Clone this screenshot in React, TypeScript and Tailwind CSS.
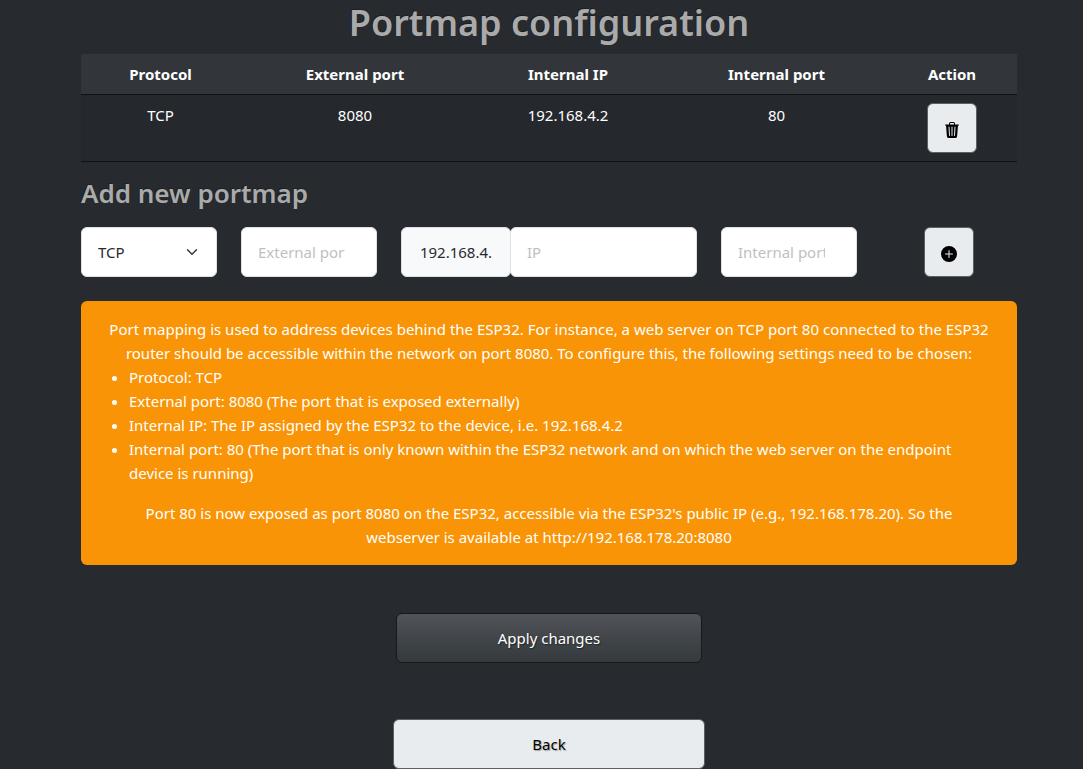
import { useState } from "react";

const heading = "font-semibold text-[#aaaaaa] [text-shadow:-1px_-1px_0_rgba(0,0,0,0.3)]";
const field =
  "h-[50px] w-full min-w-0 rounded-md border border-[#dee2e6] bg-white px-4 text-[#272b30] outline-none placeholder:text-[#bfbfbf]";
const iconButton =
  "flex size-[50px] items-center justify-center rounded-md border border-[#5d6063] bg-[#e9ecef] text-black";

const mappings = [{ protocol: "TCP", external: "8080", ip: "192.168.4.2", internal: "80" }];

function TrashIcon() {
  return (
    <svg viewBox="0 0 16 16" className="mt-1 size-4" fill="currentColor" aria-hidden="true">
      <path d="M11 1.5v1h3.5a.5.5 0 0 1 0 1h-.538l-.853 10.66A2 2 0 0 1 11.115 16h-6.23a2 2 0 0 1-1.994-1.84L2.038 3.5H1.5a.5.5 0 0 1 0-1H5v-1A1.5 1.5 0 0 1 6.5 0h3A1.5 1.5 0 0 1 11 1.5m-5 0v1h4v-1a.5.5 0 0 0-.5-.5h-3a.5.5 0 0 0-.5.5M4.5 5.029l.5 8.5a.5.5 0 1 0 .998-.06l-.5-8.5a.5.5 0 1 0-.998.06m6.53-.528a.5.5 0 0 0-.528.47l-.5 8.5a.5.5 0 0 0 .998.058l.5-8.5a.5.5 0 0 0-.47-.528M8 4.5a.5.5 0 0 0-.5.5v8.5a.5.5 0 0 0 1 0V5a.5.5 0 0 0-.5-.5" />
    </svg>
  );
}

function PlusIcon() {
  return (
    <svg viewBox="0 0 16 16" className="mt-1 size-4" fill="currentColor" aria-hidden="true">
      <path d="M16 8A8 8 0 1 1 0 8a8 8 0 0 1 16 0M8.5 4.5a.5.5 0 0 0-1 0v3h-3a.5.5 0 0 0 0 1h3v3a.5.5 0 0 0 1 0v-3h3a.5.5 0 0 0 0-1h-3z" />
    </svg>
  );
}

export default function App() {
  const [protocol, setProtocol] = useState("TCP");
  return (
    <div className="min-h-screen bg-[#272b30] pl-[15px] font-['Noto_Sans',sans-serif] text-[15px] leading-6 text-white">
      <main className="mx-auto max-w-[936px]">
        <h1 className={`${heading} pb-2 text-center text-[36px] leading-[46px]`}>Portmap configuration</h1>

        <table className="w-full table-fixed border-collapse text-center">
          <colgroup>
            <col className="w-[159px]" />
            <col className="w-[230px]" />
            <col className="w-[196px]" />
            <col className="w-[221px]" />
            <col className="w-[130px]" />
          </colgroup>
          <thead>
            <tr className="border-b border-[#0f1113] bg-[#32353a]">
              {["Protocol", "External port", "Internal IP", "Internal port", "Action"].map((label) => (
                <th key={label} scope="col" className="p-2 font-bold">{label}</th>
              ))}
            </tr>
          </thead>
          <tbody>
            {mappings.map((m) => (
              <tr key={m.external} className="border-b border-[#0f1113] bg-[#25282d] align-top">
                <td className="p-2">{m.protocol}</td>
                <td className="p-2">{m.external}</td>
                <td className="p-2">{m.ip}</td>
                <td className="p-2">{m.internal}</td>
                <td className="p-2">
                  <button type="button" aria-label="Delete" className={`${iconButton} mx-auto`}>
                    <TrashIcon />
                  </button>
                </td>
              </tr>
            ))}
          </tbody>
        </table>

        <h2 className={`${heading} pt-[15px] pb-[17px] text-[26px] leading-[33px]`}>Add new portmap</h2>

        <form className="grid grid-cols-6 gap-6" onSubmit={(e) => e.preventDefault()}>
          <div className="grid items-center">
            <select
              aria-label="Protocol"
              value={protocol}
              onChange={(e) => setProtocol(e.target.value)}
              className={`${field} col-start-1 row-start-1 appearance-none`}
            >
              <option>TCP</option>
              <option>UDP</option>
            </select>
            <svg viewBox="0 0 16 16" className="pointer-events-none col-start-1 row-start-1 mr-[17px] h-3 w-4 justify-self-end" fill="none" stroke="#343a40" strokeWidth="2" strokeLinecap="round" strokeLinejoin="round" aria-hidden="true">
              <path d="m2 5 6 6 6-6" />
            </svg>
          </div>
          <input aria-label="External port" placeholder="External port" className={`${field} pr-[31px]`} />
          <div className="col-span-2 flex">
            <label htmlFor="ip" className="flex h-[50px] w-[110px] shrink-0 items-center justify-center rounded-md border border-[#dee2e6] bg-[#f8f9fa] text-[#272b30]">
              192.168.4.
            </label>
            <input id="ip" placeholder="IP" className={`${field} -ml-px`} />
          </div>
          <input aria-label="Internal port" placeholder="Internal port" className={`${field} pr-[31px]`} />
          <button type="submit" aria-label="Add" className={`${iconButton} justify-self-center`}>
            <PlusIcon />
          </button>
        </form>

        <section className="mt-6 rounded-md bg-[#f89406] p-4 text-center">
          <p>
            Port mapping is used to address devices behind the ESP32. For instance, a web server on TCP port 80 connected to the ESP32 router should be accessible within the network on port 8080. To configure this, the following settings need to be chosen:
          </p>
          <ul className="mb-4 list-disc pl-8 text-left">
            <li>Protocol: TCP</li>
            <li>External port: 8080 (The port that is exposed externally)</li>
            <li>Internal IP: The IP assigned by the ESP32 to the device, i.e. 192.168.4.2</li>
            <li>Internal port: 80 (The port that is only known within the ESP32 network and on which the web server on the endpoint device&nbsp;is&nbsp;running)</li>
          </ul>
          <p>
            Port 80 is now exposed as port 8080 on the ESP32, accessible via the ESP32's public IP (e.g., 192.168.178.20). So the webserver&nbsp;is&nbsp;available at http://192.168.178.20:8080
          </p>
        </section>

        <div className="mt-12 flex flex-col items-center gap-14">
          <button type="button" className="h-[50px] w-[306px] rounded-md border border-[#17191c] bg-linear-to-b from-[#515458] via-[#3e4347] via-60% to-[#363a3d] text-shadow-[1px_1px_1px_rgba(0,0,0,0.4)]">
            Apply changes
          </button>
          <button type="button" className="h-[50px] w-[312px] rounded-md border border-[#5d6063] bg-[#e9ecef] text-black text-shadow-[1px_1px_1px_rgba(0,0,0,0.3)]">
            Back
          </button>
        </div>
      </main>
    </div>
  );
}
